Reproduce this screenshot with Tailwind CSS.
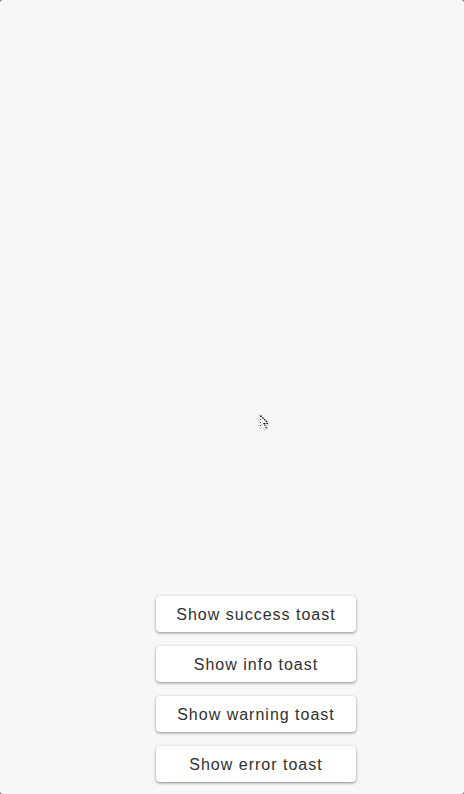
<!DOCTYPE html>
<html lang="en">
<head>
<meta charset="utf-8">
<meta name="viewport" content="width=device-width, initial-scale=1">
<title>Toasts</title>
<script src="https://cdn.jsdelivr.net/npm/@tailwindcss/browser@4"></script>
</head>
<body class="bg-[#6b6b6b] font-['Liberation_Sans',Arial,sans-serif]">
<main class="relative flex min-h-screen flex-col items-center justify-end gap-3.5 rounded-[3px] bg-[#f7f7f7] pb-3 pl-12 text-base tracking-[1px] text-[#303030]">
  <button type="button" class="h-9 w-50 rounded bg-white pt-0.5 shadow-[0_1px_3px_rgba(0,0,0,0.45)]">Show success toast</button>
  <button type="button" class="h-9 w-50 rounded bg-white pt-0.5 shadow-[0_1px_3px_rgba(0,0,0,0.45)]">Show info toast</button>
  <button type="button" class="h-9 w-50 rounded bg-white pt-0.5 shadow-[0_1px_3px_rgba(0,0,0,0.45)]">Show warning toast</button>
  <button type="button" class="h-9 w-50 rounded bg-white pt-0.5 shadow-[0_1px_3px_rgba(0,0,0,0.45)]">Show error toast</button>
  <svg class="absolute top-[413px] left-[257px] h-5 w-4" viewBox="0 0 16 20" aria-hidden="true">
    <path d="M2 1.5V16L5.5 13.5L7.5 17.5L11 16L9 12H12Z" fill="#fff" stroke="#d6d6d6" stroke-width="1"/>
    <path d="M3.5 2.5L10.5 9.5V10.5H7L9.5 15.5" fill="none" stroke="#111" stroke-width="1.2" stroke-dasharray="1.6 1"/>
    <path d="M3.5 3V13L6 10.5" fill="none" stroke="#333" stroke-width="1" stroke-dasharray="1 2"/>
  </svg>
</main>
</body>
</html>
